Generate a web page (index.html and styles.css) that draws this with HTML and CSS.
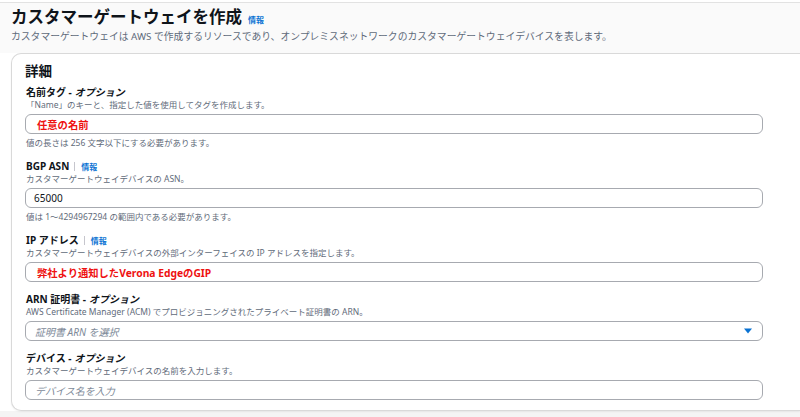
FILE: index.html
```html
<!DOCTYPE html>
<html lang="ja">
<head>
<meta charset="utf-8">
<link rel="stylesheet" href="styles.css">
</head>
<body>
<div class="page">
  <header class="header">
    <h1 class="title">カスタマーゲートウェイを作成 <a class="info info-title">情報</a></h1>
    <p class="subtitle">カスタマーゲートウェイは AWS で作成するリソースであり、オンプレミスネットワークのカスタマーゲートウェイデバイスを表します。</p>
  </header>
  <section class="card">
    <h2 class="card-title">詳細</h2>

    <div class="field">
      <div class="label">名前タグ - <i>オプション</i></div>
      <div class="desc">「Name」のキーと、指定した値を使用してタグを作成します。</div>
      <div class="input"><span class="red">任意の名前</span></div>
      <div class="hint">値の長さは 256 文字以下にする必要があります。</div>
    </div>

    <div class="field">
      <div class="label">BGP ASN <span class="sep"></span><a class="info">情報</a></div>
      <div class="desc">カスタマーゲートウェイデバイスの ASN。</div>
      <div class="input"><span class="value">65000</span></div>
      <div class="hint">値は 1〜4294967294 の範囲内である必要があります。</div>
    </div>

    <div class="field">
      <div class="label">IP アドレス <span class="sep"></span><a class="info">情報</a></div>
      <div class="desc">カスタマーゲートウェイデバイスの外部インターフェイスの IP アドレスを指定します。</div>
      <div class="input"><span class="red">弊社より通知したVerona EdgeのGIP</span></div>
    </div>

    <div class="field">
      <div class="label">ARN 証明書 - <i>オプション</i></div>
      <div class="desc">AWS Certificate Manager (ACM) でプロビジョニングされたプライベート証明書の ARN。</div>
      <div class="input select"><span class="placeholder">証明書 ARN を選択</span><svg class="caret" width="8" height="6" viewBox="0 0 8 6"><path d="M0 0.5h8L4 5.5z" fill="#0972d3"/></svg></div>
    </div>

    <div class="field">
      <div class="label">デバイス - <i>オプション</i></div>
      <div class="desc">カスタマーゲートウェイデバイスの名前を入力します。</div>
      <div class="input"><span class="placeholder">デバイス名を入力</span></div>
    </div>
  </section>
</div>
</body>
</html>
```

FILE: styles.css
```css
html, body {
  margin: 0;
  padding: 0;
  width: 800px;
  height: 417px;
  overflow: hidden;
  background: #f4f4f4;
  font-family: "Noto Sans", "Noto Sans CJK JP", sans-serif;
  color: #0f141a;
}

.page {
  padding-top: 2px;
  background: #ffffff;
}

.header {
  border-top: 1px solid #e2e2e2;
  background: #fafafa;
  padding: 3px 0 9px 11px;
}

.title {
  margin: 0;
  height: 22px;
  display: flex;
  align-items: center;
  white-space: nowrap;
  font-size: 16.5px;
  line-height: 22px;
  font-weight: 700;
  color: #0f141a;
}

.info {
  color: #0972d3;
  font-size: 8px;
  font-weight: 700;
  text-decoration: none;
}

.info-title {
  margin-left: 6px;
  margin-top: 5px;
}

.subtitle {
  margin: 2px 0 0;
  height: 14px;
  overflow: hidden;
  white-space: nowrap;
  font-size: 9.8px;
  line-height: 14px;
  color: #5f6b7a;
}

.card {
  background: #ffffff;
  border: 1px solid #d9d9d9;
  border-right: none;
  border-radius: 10px 0 0 10px;
  margin-left: 11px;
  padding: 8px 0 10px 13px;
  box-shadow: 0 1px 2px rgba(0, 0, 0, 0.06);
}

.card-title {
  margin: 0;
  height: 18px;
  font-size: 13.5px;
  line-height: 18px;
  font-weight: 700;
  color: #0f141a;
}

.field {
  margin-top: 11px;
}

.card-title + .field {
  margin-top: 6px;
}

.label {
  display: flex;
  align-items: center;
  height: 13px;
  white-space: nowrap;
  font-size: 10px;
  line-height: 13px;
  font-weight: 700;
  color: #0f141a;
  padding-left: 1px;
}

.label i {
  font-style: italic;
  margin-left: 3px;
}

.sep {
  display: inline-block;
  width: 1px;
  height: 9px;
  background: #c6c6cd;
  margin: 0 6px 0 5px;
}

.desc, .hint {
  height: 12px;
  overflow: hidden;
  white-space: nowrap;
  font-size: 8.5px;
  line-height: 12px;
  color: #5f6b7a;
  padding-left: 1px;
}

.hint {
  margin-top: 3px;
}

.input {
  margin-top: 3px;
  width: 728px;
  height: 18px;
  border: 1px solid #a7aab0;
  border-radius: 6px;
  display: flex;
  align-items: center;
  padding-left: 8px;
  box-sizing: content-box;
  white-space: nowrap;
  font-size: 10px;
}

.select {
  justify-content: space-between;
}

.caret {
  margin-right: 10px;
}

.red {
  color: #ee1111;
  font-weight: 700;
  padding-left: 3px;
  font-size: 10.3px;
}

.value {
  color: #0f141a;
}

.placeholder {
  color: #7d8998;
  font-style: italic;
  padding-left: 1px;
}
```
